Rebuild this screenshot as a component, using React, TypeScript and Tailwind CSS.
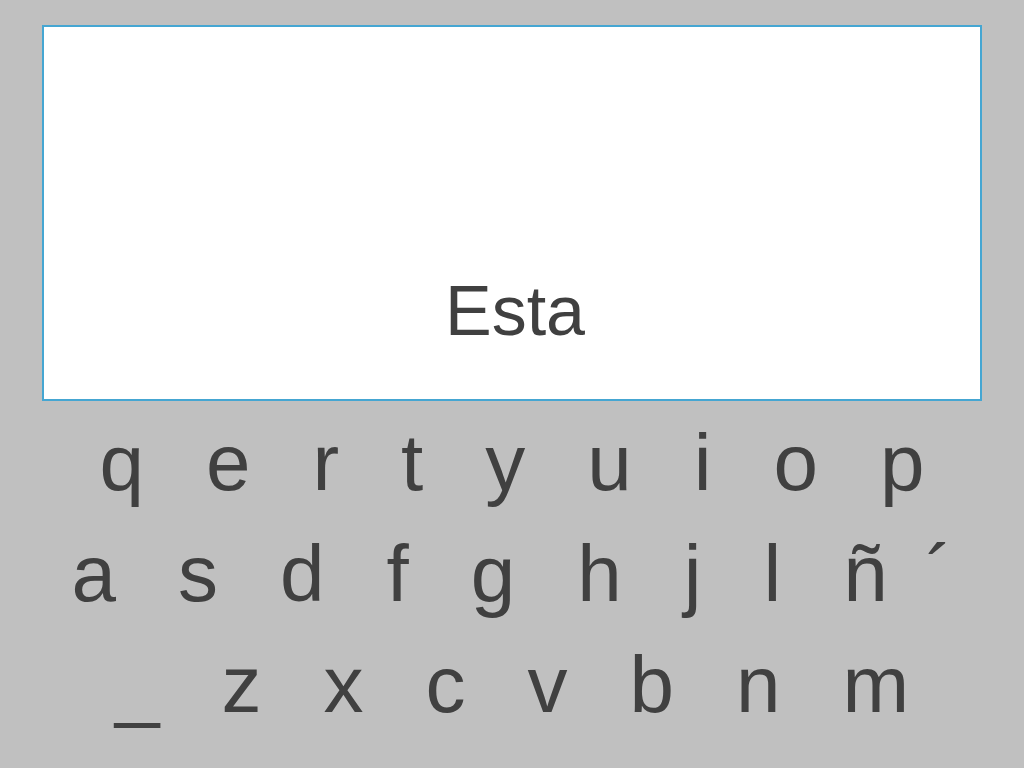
const rows: string[][] = [
  ['q', 'e', 'r', 't', 'y', 'u', 'i', 'o', 'p'],
  ['a', 's', 'd', 'f', 'g', 'h', 'j', 'l', 'ñ', '´'],
  ['_', 'z', 'x', 'c', 'v', 'b', 'n', 'm'],
]

export default function App() {
  return (
    <div
      className="w-[1024px] h-[768px] bg-[#c0c0c0] text-[#404040] overflow-hidden flex flex-col"
      style={{ fontFamily: '"Liberation Sans", Arial, sans-serif' }}
    >
      {/* Text display */}
      <div className="mx-[42px] mt-[25px] h-[376px] bg-white border-2 border-[#45a6d2] flex flex-col justify-end items-center pb-[53px]">
        <span className="text-[70px] leading-none pl-[6px]">Esta</span>
      </div>

      {/* Keyboard */}
      <div className="mt-[6px] flex flex-col">
        {rows.map((row, i) => (
          <div key={i} className="h-[111px] flex justify-center items-center gap-[62px] text-[80px] leading-[111px]">
            {row.map((k) => (
              <span key={k} className={k === '´' ? '-ml-[24px]' : ''}>
                {k}
              </span>
            ))}
          </div>
        ))}
      </div>
    </div>
  )
}
